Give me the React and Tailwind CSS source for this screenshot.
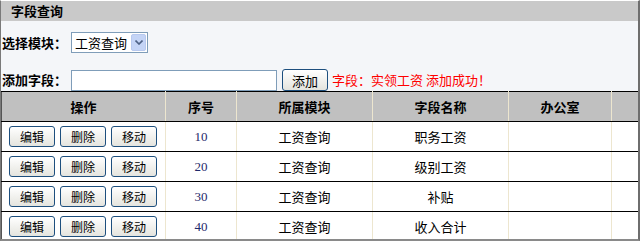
const rows = [
  { no: "10", module: "工资查询", name: "职务工资" },
  { no: "20", module: "工资查询", name: "级别工资" },
  { no: "30", module: "工资查询", name: "补贴" },
  { no: "40", module: "工资查询", name: "收入合计" }
];

const font = { fontFamily: '"Noto Sans CJK SC", "Liberation Sans", sans-serif' };

const Btn = ({ children, className = "" }) => (
  <button
    className={`h-[21px] w-[46px] rounded-[3px] border border-[#1d4f7e] bg-gradient-to-b from-white to-[#e4e4de] text-[12px] leading-none text-black ${className}`}
  >
    {children}
  </button>
);

export default function App() {
  return (
    <div
      className="h-[241px] w-[640px] overflow-hidden border-b-2 border-l border-r-2 border-t border-b-[#8a8a8a] border-l-[#7a7a7a] border-r-[#6e6e6e] border-t-white bg-[#f4f6f9] text-[12px] text-black"
      style={font}
    >
      <div className="flex h-[20px] items-center bg-[#c9c9c9] pl-[10px] text-[13px] font-bold">字段查询</div>

      <div className="mt-[11px] flex h-[21px] items-center">
        <span className="pl-px text-[13px] font-bold">选择模块：</span>
        <div className="ml-[4px] flex h-[21px] w-[77px] items-center border border-[#7f9db9] bg-white pl-[3px]">
          <span className="flex-1 text-[13px]">工资查询</span>
          <span className="mr-px flex h-[17px] w-[15px] items-center justify-center rounded-[2px] border border-[#b8c9ef] bg-[#c4d4f6]">
            <svg width="8" height="5" viewBox="0 0 8 5">
              <path d="M0.5 0.5 L4 4 L7.5 0.5" fill="none" stroke="#4d6185" strokeWidth="1.6" />
            </svg>
          </span>
        </div>
      </div>

      <div className="mt-[16px] flex h-[22px] items-center">
        <span className="pl-px text-[13px] font-bold">添加字段：</span>
        <input
          className="ml-[4px] h-[21px] w-[206px] border border-[#7f9db9] bg-white outline-none"
          defaultValue=""
        />
        <button className="ml-[5px] h-[22px] w-[46px] rounded-[3px] border border-[#1d4f7e] bg-gradient-to-b from-white to-[#e4e4de] text-[13px] leading-none">
          添加
        </button>
        <span className="ml-[4px] text-[13px] text-[#ff0000]">字段：实领工资 添加成功！</span>
      </div>

      <table className="w-[637px] border-collapse border-l border-t border-l-[#555] border-t-black">
        <colgroup>
          <col className="w-[164px]" />
          <col className="w-[71px]" />
          <col className="w-[136px]" />
          <col className="w-[136px]" />
          <col className="w-[103px]" />
          <col />
        </colgroup>
        <thead>
          <tr className="h-[30px] bg-[#c0c0c0] text-[13px] font-bold">
            <th className="border-b border-b-black">操作</th>
            <th className="border-b border-l border-b-black border-l-[#ede6cf]">序号</th>
            <th className="border-b border-l border-b-black border-l-[#ede6cf]">所属模块</th>
            <th className="border-b border-l border-b-black border-l-[#ede6cf]">字段名称</th>
            <th className="border-b border-l border-b-black border-l-[#ede6cf]">办公室</th>
            <th className="border-b border-l border-b-black border-l-[#ede6cf]"></th>
          </tr>
        </thead>
        <tbody className="bg-white">
          {rows.map((r, i) => (
            <tr key={r.no} className="h-[30px] text-[13px]">
              <td className={i < rows.length - 1 ? "border-b border-b-black" : ""}>
                <div className="flex items-center gap-[5px] pl-[7px]">
                  <Btn>编辑</Btn>
                  <Btn>删除</Btn>
                  <Btn>移动</Btn>
                </div>
              </td>
              <td
                className={`border-l border-l-[#ede6cf] text-center text-[13px] text-[#1f2a6b] ${i < rows.length - 1 ? "border-b border-b-black" : ""}`}
                style={{ fontFamily: '"Liberation Serif", serif' }}
              >
                {r.no}
              </td>
              <td className={`border-l border-l-[#ede6cf] text-center ${i < rows.length - 1 ? "border-b border-b-black" : ""}`}>
                {r.module}
              </td>
              <td className={`border-l border-l-[#ede6cf] text-center ${i < rows.length - 1 ? "border-b border-b-black" : ""}`}>
                {r.name}
              </td>
              <td className={`border-l border-l-[#ede6cf] ${i < rows.length - 1 ? "border-b border-b-black" : ""}`}></td>
              <td className={`border-l border-l-[#ede6cf] ${i < rows.length - 1 ? "border-b border-b-black" : ""}`}></td>
            </tr>
          ))}
        </tbody>
      </table>
    </div>
  );
}
